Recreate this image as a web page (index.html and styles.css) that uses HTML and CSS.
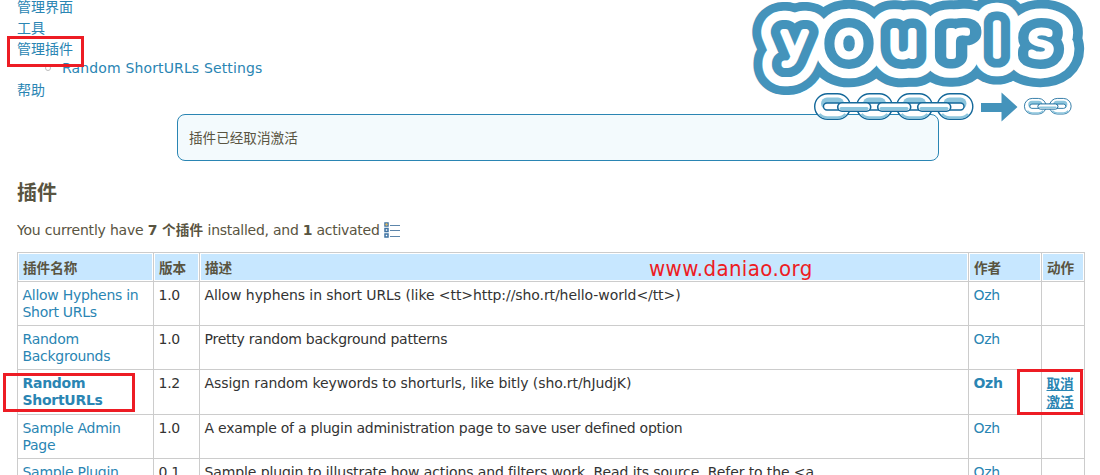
FILE: index.html
```
<!DOCTYPE html>
<html lang="zh-CN">
<head>
<meta charset="utf-8">
<title>YOURLS</title>
<link rel="stylesheet" href="styles.css">
</head>
<body>
<div class="page">
  <ul class="menu">
    <li><a>管理界面</a></li>
    <li><a>工具</a></li>
    <li><a>管理插件</a></li>
    <li class="sub"><i class="bullet"></i><a>Random ShortURLs Settings</a></li>
    <li class="help"><a>帮助</a></li>
  </ul>
  <div class="notice">插件已经取消激活</div>
  <h2>插件</h2>
  <p class="summary"><span>You currently have <b>7 <span class="cjk">个插件</span></b><span class="rest"> installed, and <b>1</b> activated</span></span>
    <svg class="toggle" width="17" height="16" viewBox="0 0 17 16"><path d="M6 3.500h10M6 8.500h10M6 14.500h10" stroke="#5d86ab" fill="none"/><path d="M1 1h3v3H1zM1 6.500h3v3H1zM1 12h3v3H1z" fill="#fff" stroke="#3f73a3" stroke-width="1.5"/><path d="M1.500 1.500h2V3.500h-2z" fill="#e8b64c"/></svg>
  </p>
  <table>
    <colgroup><col class="c1"><col class="c2"><col class="c3"><col class="c4"><col class="c5"></colgroup>
    <thead><tr><th>插件名称</th><th>版本</th><th>描述</th><th>作者</th><th>动作</th></tr></thead>
    <tbody>
      <tr><td><a>Allow Hyphens in<br>Short URLs</a></td><td>1.0</td><td><span class="d1">Allow hyphens in short URLs (like &lt;tt&gt;http://sho.rt/hello-world&lt;/tt&gt;)</span></td><td><a>Ozh</a></td><td></td></tr>
      <tr><td><a>Random<br>Backgrounds</a></td><td>1.0</td><td><span class="d2">Pretty random background patterns</span></td><td><a>Ozh</a></td><td></td></tr>
      <tr class="active"><td><a>Random<br>ShortURLs</a></td><td>1.2</td><td><span class="d3">Assign random keywords to shorturls, like bitly (sho.rt/hJudjK)</span></td><td><a>Ozh</a></td><td><a class="act">取消<br>激活</a></td></tr>
      <tr><td><a>Sample Admin<br>Page</a></td><td>1.0</td><td><span class="d4">A example of a plugin administration page to save user defined option</span></td><td><a>Ozh</a></td><td></td></tr>
      <tr><td><a>Sample Plugin</a></td><td>0.1</td><td><span class="d5">Sample plugin to illustrate how actions and filters work. Read its source. Refer to the &lt;a</span></td><td><a>Ozh</a></td><td></td></tr>
    </tbody>
  </table>
</div>

<svg class="logo" width="360" height="130" viewBox="740 0 360 130">
  <defs>
    <g id="word" class="word">
      <text transform="translate(794.500 55.500) scale(1.09 1.05)">y</text><text transform="translate(849 55.500) scale(1.16 1.08)">o</text><text transform="translate(903.500 55.500) scale(1.120 1.08)">u</text><text transform="translate(955 55.500) scale(1.300 1.080)">r</text><text transform="translate(997 55.500) scale(1.05 1)">l</text><text transform="translate(1041 55.500) scale(1.180 1.080)">s</text>
    </g>
    <g id="ring">
      <rect x=".7" y=".7" width="35.600" height="25.600" rx="12.800" fill="#fff" stroke="#14689a" stroke-width="1.400"/>
      <rect x="7" y="4.500" width="23" height="12" rx="6" fill="#8cc5dd"/>
      <path d="M5.500 21q3 3.500 8 3.500h10q5 0 8-3.500" fill="none" stroke="#8cc5dd" stroke-width="2.500"/>
      <rect x="9.500" y="10" width="18" height="7" rx="3.500" fill="#fff" stroke="#14689a" stroke-width="1.400"/>
    </g>
    <g id="bar">
      <rect x=".7" y=".7" width="33" height="8.600" rx="4.300" fill="#fff" stroke="#14689a" stroke-width="1.600"/>
      <path d="M4 6.500h26" stroke="#8cc5dd" stroke-width="3" stroke-linecap="round"/>
    </g>
  </defs>
  <use href="#word" stroke="#4493bb" stroke-width="57"/>
  <use href="#word" stroke="#fff" stroke-width="40.500"/>
  <use href="#word" stroke="#4493bb" stroke-width="23"/>
  <use href="#word" stroke="#fff" stroke-width="5.500"/>
  <g>
    <use href="#ring" x="814" y="93"/><use href="#ring" x="856" y="93"/><use href="#ring" x="896" y="93"/><use href="#ring" x="936.500" y="93"/>
    <use href="#bar" x="837" y="102"/><use href="#bar" x="877" y="102"/><use href="#bar" x="917" y="102"/>
  </g>
  <path d="M981 103h20.500V92.500L1017.500 107 1001.500 121.500V112H981z" fill="#4493bb"/>
  <g transform="translate(1024 98) scale(.61)"><use href="#ring"/><use href="#ring" x="41"/><use href="#bar" x="22" y="9"/></g>
</svg>
<div class="mark m1"></div><div class="mark m2"></div><div class="mark m3"></div>
<div class="stamp">www.daniao.org</div>
</body>
</html>
```
FILE: styles.css
```
* { box-sizing: border-box; }
html, body { margin: 0; height: 475px; overflow: hidden; background: #fff; }
body { position: relative; font: 14px/17px "DejaVu Sans", "Noto Sans CJK SC", sans-serif; color: #595441; }
.page { height: 475px; overflow: hidden; padding: 0 15px 0 17px; }
a { color: #2a85b3; }
.menu { list-style: none; margin: 0; padding: 0; height: 114px; overflow: hidden; }
.menu li { height: 21px; line-height: 21px; }
.menu li:first-child { height: 18px; line-height: 14px; }
.menu .sub { display: flex; align-items: center; padding-left: 28px; height: 16px; letter-spacing: .14px; }
.menu .help { height: 24px; line-height: 24px; margin-top: 2px; }
.bullet { width: 6px; height: 6px; border: 1px solid #bbb; border-radius: 50%; margin-right: 11px; }
.notice { width: 762px; height: 47px; margin-left: 160px; padding: 0 11px; line-height: 47px; border: 1px solid #2a85b3; border-radius: 8px; background: #f3fafd; font-size: 13.6px; }
h2 { margin: 19px 0 0; font-size: 20px; line-height: 26px; height: 26px; }
.summary { margin: 15px 0 0; height: 31px; line-height: 18px; display: flex; gap: 4px; letter-spacing: -.2px; }
.cjk { font-size: 13.6px; letter-spacing: .2px; }
.rest { letter-spacing: -.26px; }
.toggle { margin-top: 1px; }
table { width: 1068px; table-layout: fixed; border-collapse: collapse; }
.c1 { width: 136px; } .c2 { width: 46px; } .c3 { width: 769px; } .c4 { width: 73px; } .c5 { width: 43px; }
th, td { border: 1px solid #ccc; text-align: left; vertical-align: top; white-space: nowrap; overflow: hidden; }
th { height: 29px; padding: 2px 5px 0; line-height: 26px; background: #c7e7ff; box-shadow: inset 0 0 0 1px #fff; font-size: 13.6px; }
td { height: 44px; padding: 5px 4.5px 0; color: #333; letter-spacing: -.28px; }
.active td { height: 45px; }
.active a { font-weight: bold; }
.active .act { text-decoration: underline; letter-spacing: 0; line-height: 18px; font-size: 13.6px; }
.d1 { letter-spacing: -.08px; }
.d2 { letter-spacing: -.24px; }
.d3 { letter-spacing: -.08px; }
.d4 { letter-spacing: -.25px; }
.d5 { letter-spacing: -.11px; }
.logo { position: absolute; left: 740px; top: 0; }
.word { font: 200 43px "DejaVu Sans", sans-serif; text-anchor: middle; fill: #fff; stroke-linejoin: round; stroke-linecap: round; }
.mark { position: absolute; border: 3px solid #ed1c24; }
.m1 { left: 7px; top: 36px; width: 77px; height: 31px; }
.m2 { left: 3px; top: 373px; width: 132px; height: 39px; }
.m3 { left: 1017px; top: 369px; width: 66px; height: 46px; }
.stamp { position: absolute; left: 649px; top: 256px; font: 22px/26px "DejaVu Sans Condensed", "DejaVu Sans", sans-serif; font-stretch: condensed; letter-spacing: .4px; color: #ed1c24; white-space: nowrap; }
```
